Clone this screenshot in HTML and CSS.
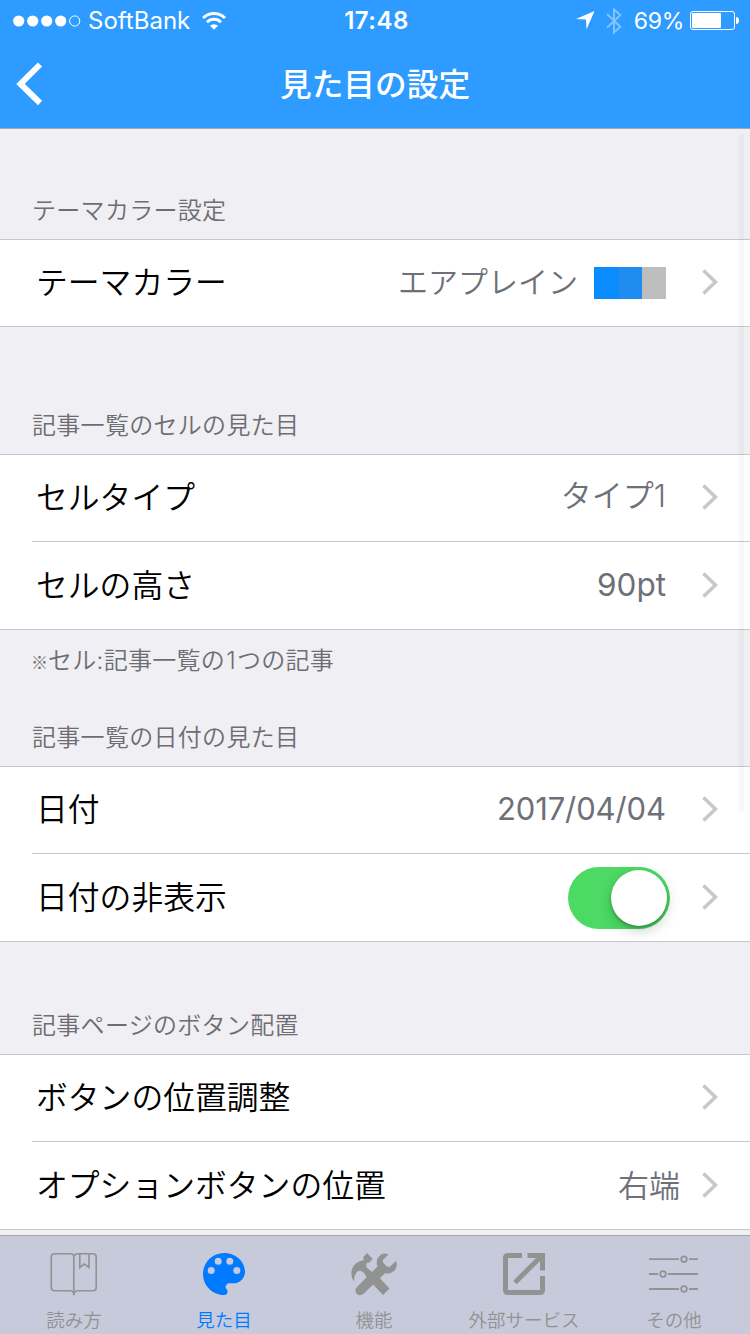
FILE: index.html
```html
<!DOCTYPE html>
<html lang="ja">
<head>
  <meta charset="UTF-8">
  <title>見た目の設定</title>
  <link rel="stylesheet" href="styles.css">
</head>
<body>
  <!-- 共通アイコン -->
  <svg class="defs" width="0" height="0">
    <symbol id="chevron" viewBox="0 0 16 26">
      <path d="M1.5 1.5 L13.5 13 L1.5 24.5" fill="none" stroke="#c7c7cc" stroke-width="3.6"/>
    </symbol>
  </svg>

  <header class="header">
    <div class="status">
      <div class="status-left">
        <svg width="68" height="12" viewBox="0 0 68 12" fill="#fff">
          <circle cx="5.7" cy="6" r="5.6"/>
          <circle cx="19.7" cy="6" r="5.6"/>
          <circle cx="33.7" cy="6" r="5.6"/>
          <circle cx="47.7" cy="6" r="5.6"/>
          <circle cx="61.7" cy="6" r="5.1" fill="none" stroke="#fff"/>
        </svg>
        <span class="carrier">SoftBank</span>
        <svg width="24" height="18" viewBox="0 0 24 18" fill="none" stroke="#fff" stroke-width="3">
          <path d="M1 6 A15.6 15.6 0 0 1 23 6"/>
          <path d="M5 10.3 A9.8 9.8 0 0 1 19 10.3"/>
          <path d="M12 17.8 L8 13.8 A5.8 5.8 0 0 1 16 13.8 Z" fill="#fff" stroke="none"/>
        </svg>
      </div>
      <div class="clock">17:48</div>
      <div class="status-right">
        <svg width="19" height="19" viewBox="0 0 19 19"><path d="M18.5 0 L10.5 18.5 L10 8.5 L0 8 Z" fill="#fff"/></svg>
        <svg class="bluetooth" width="16" height="28" viewBox="0 0 16 28" fill="none" stroke="#80c4ff" stroke-width="2">
          <path d="M1 7 L14.3 19.7 L8 25.5 V2.5 L14.3 8 L1 20.7"/>
        </svg>
        <span class="percent">69%</span>
        <svg width="50" height="20" viewBox="0 0 50 20">
          <rect x=".5" y=".5" width="44" height="18" rx="2.5" fill="none" stroke="#fff"/>
          <rect x="2" y="2" width="29" height="15" rx="1" fill="#fff"/>
          <path d="M46 6 Q49 6 49 9.5 Q49 13 46 13 Z" fill="#fff"/>
        </svg>
      </div>
    </div>
    <nav class="navbar">
      <svg class="back" width="28" height="44" viewBox="0 0 28 44"><path d="M24 2.5 L4.5 22 L24 41" fill="none" stroke="#fff" stroke-width="6"/></svg>
      <h1>見た目の設定</h1>
    </nav>
  </header>

  <main class="settings">
    <h2 class="first">テーマカラー設定</h2>
    <ul class="list">
      <li class="row">
        <span class="label">テーマカラー</span>
        <span class="value theme">エアプレイン</span>
        <span class="swatch"><i class="main"></i><i class="sub"></i><i class="gray"></i></span>
        <svg class="chevron"><use href="#chevron"/></svg>
      </li>
    </ul>

    <h2>記事一覧のセルの見た目</h2>
    <ul class="list">
      <li class="row">
        <span class="label">セルタイプ</span>
        <span class="value type">タイプ1</span>
        <svg class="chevron"><use href="#chevron"/></svg>
      </li>
      <li class="row">
        <span class="label">セルの高さ</span>
        <span class="value latin">90pt</span>
        <svg class="chevron"><use href="#chevron"/></svg>
      </li>
    </ul>
    <p class="note"><span class="mark">※</span>セル:記事一覧の<span class="one">1</span>つの記事</p>

    <h2 class="after-note">記事一覧の日付の見た目</h2>
    <ul class="list">
      <li class="row">
        <span class="label">日付</span>
        <span class="value latin date">2017/04/04</span>
        <svg class="chevron"><use href="#chevron"/></svg>
      </li>
      <li class="row">
        <span class="label">日付の非表示</span>
        <span class="toggle"><i class="knob"></i></span>
        <svg class="chevron"><use href="#chevron"/></svg>
      </li>
    </ul>

    <h2 class="buttons">記事ページのボタン配置</h2>
    <ul class="list">
      <li class="row">
        <span class="label">ボタンの位置調整</span>
        <svg class="chevron"><use href="#chevron"/></svg>
      </li>
      <li class="row">
        <span class="label">オプションボタンの位置</span>
        <span class="value edge">右端</span>
        <svg class="chevron"><use href="#chevron"/></svg>
      </li>
    </ul>
  </main>
  <div class="scrollbar"></div>

  <footer class="tabbar">
    <a class="tab">
      <svg width="50" height="44" viewBox="0 0 50 44" fill="none" stroke="#929292" stroke-width="1.6">
        <path d="M25 40.5 Q24 37.7 21 37.7 H5.5 Q2.3 37.7 2.3 34.5 V4 Q2.3 .8 5.5 .8 H21 Q24 .8 25 2.8 Q26 .8 29 .8 H44 Q47.2 .8 47.2 4 V34.5 Q47.2 37.7 44 37.7 H29 Q26 37.7 25 40.5 Z"/>
        <path d="M24.8 2 V42"/>
        <path d="M30.8 1 V14.5 L35.3 11 L40 14.5 V1"/>
      </svg>
      <span>読み方</span>
    </a>
    <a class="tab active">
      <svg width="42" height="44" viewBox="0 0 42 44">
        <path fill="#007aff" fill-rule="evenodd" d="M21 0 C9.4 0 0 9.4 0 21 S9.4 42 21 42 A3.5 3.5 0 0 0 24.5 38.5 C24.5 37.6 24.1 36.8 23.6 36.2 A3.5 3.5 0 0 1 26.2 30.3 H30.3 A11.7 11.7 0 0 0 42 18.7 C42 8.4 32.6 0 21 0 Z M8.2 21 A3.5 3.5 0 1 1 8.2 14 A3.5 3.5 0 0 1 8.2 21 Z M15.2 11.7 A3.5 3.5 0 1 1 15.2 4.7 A3.5 3.5 0 0 1 15.2 11.7 Z M26.8 11.7 A3.5 3.5 0 1 1 26.8 4.7 A3.5 3.5 0 0 1 26.8 11.7 Z M33.8 21 A3.5 3.5 0 1 1 33.8 14 A3.5 3.5 0 0 1 33.8 21 Z"/>
      </svg>
      <span>見た目</span>
    </a>
    <a class="tab">
      <svg width="46" height="44" viewBox="0 0 46 44" fill="#929292">
        <!-- スパナ -->
        <path d="M37.5 1.2 L32 7 V9.5 L36 13.8 H38.8 L45 8 Q47 13 43.5 17.5 Q39.5 21.5 34 20.3 L12.5 40.8 Q8.5 43.5 5.6 40.8 Q3 37.5 6 34 L26.5 13.5 Q24.5 8 27.5 4 Q31.5 -1 37.5 1.2 Z"/>
        <!-- ハンマー -->
        <path d="M12.3 4 L16 0 L21.8 6 L18 9.7 H16.2 Q14.2 12.5 16.2 15 L20.5 18.5 L24.5 20.5 L38.5 35.5 L32 42 L15.5 24.5 L13.5 20.5 Q9.5 16 6 19 Q3 22 3 28.5 Q-1 23 1 16 Q4 8.5 12.8 7 Z"/>
      </svg>
      <span>機能</span>
    </a>
    <a class="tab">
      <svg width="42" height="44" viewBox="0 0 42 44" fill="none" stroke="#929292" stroke-width="5">
        <path d="M19 2.5 H5 Q2.5 2.5 2.5 5 V37 Q2.5 39.5 5 39.5 H37 Q39.5 39.5 39.5 37 V23"/>
        <path d="M24.5 2.5 H39.5 V17.5"/>
        <path d="M12 29.5 L38 3.5"/>
      </svg>
      <span>外部サービス</span>
    </a>
    <a class="tab">
      <svg width="50" height="44" viewBox="0 0 50 44" fill="none" stroke="#929292" stroke-width="1.8">
        <path d="M0 6.2 H30 M40 6.2 H49 M0 21 H9 M19 21 H49 M0 36 H30 M40 36 H49"/>
        <circle cx="35" cy="6.2" r="2.8"/>
        <circle cx="14" cy="21" r="2.8"/>
        <circle cx="35" cy="36" r="2.8"/>
      </svg>
      <span>その他</span>
    </a>
  </footer>
</body>
</html>
```
FILE: styles.css
```css
* {
  box-sizing: border-box;
}
body {
  margin: 0;
  height: 1334px;
  overflow: hidden;
  display: flex;
  flex-direction: column;
  background-color: #efeff4;
  font-family: Inter, "Noto Sans CJK JP", sans-serif;
}
svg {
  display: block;
  flex: none;
}
.defs {
  position: absolute;
}

/* ヘッダー */
.header {
  height: 129px;
  background-color: #2d9bff;
  border-bottom: 1px solid #a7a7aa;
  color: white;
}
.status {
  display: grid;
  grid-template-columns: 1fr auto 1fr;
  align-items: center;
  height: 41px;
  padding: 0 10px 0 13px;
  font-size: 24px;
}
.status-left, .status-right {
  display: flex;
  align-items: center;
}
.status-right {
  justify-content: flex-end;
}
.carrier {
  margin: 0 12px 0 7px;
}
.clock {
  font-weight: 600;
  letter-spacing: 0.5px;
}
.bluetooth {
  margin: 0 12px 0 11px;
}
.percent {
  margin-right: 6px;
  font-size: 23px;
  letter-spacing: -0.3px;
}
.navbar {
  display: grid;
  grid-template-columns: 60px 1fr 60px;
  align-items: center;
  height: 86px;
}
.back {
  margin-left: 16px;
}
h1 {
  margin: 0;
  padding-bottom: 4px;
  font-size: 31.7px;
  font-weight: 500;
  text-align: center;
}

/* 設定リスト */
.settings {
  flex: none;
}
h2 {
  display: flex;
  align-items: flex-end;
  height: 127px;
  margin: 0;
  padding: 0 32px 12px;
  font-size: 24px;
  line-height: 32px;
  font-weight: 350;
  letter-spacing: 0.3px;
  color: #6d6d72;
}
h2.first {
  height: 110px;
}
h2.after-note {
  height: 74px;
}
h2.buttons {
  height: 112px;
}
.note {
  height: 62px;
  margin: 0;
  padding: 15px 31px;
  font-size: 24px;
  line-height: 32px;
  font-weight: 350;
  letter-spacing: 0.3px;
  color: #6d6d72;
}
.mark {
  display: inline-block;
  width: 17px;
  font-family: "Noto Sans CJK JP", sans-serif;
  font-size: 17px;
  line-height: 24px;
  letter-spacing: 0;
}
.one {
  margin: 0 1px;
}
.list {
  margin: 0;
  padding: 0;
  list-style: none;
  background-color: white;
  border-top: 1px solid #c8c7cc;
  border-bottom: 1px solid #c8c7cc;
}
.row {
  display: flex;
  align-items: center;
  height: 86px;
  margin-left: 32px;
  padding: 0 32px 2px 4px;
  font-size: 31.8px;
  font-weight: 350;
}
.row + .row {
  height: 88px;
  padding-bottom: 1px;
  border-top: 1px solid #c8c7cc;
}
.label {
  flex: 1;
  padding-bottom: 4px;
  color: black;
}
.value {
  margin-right: 36px;
  padding-bottom: 4px;
  font-size: 30px;
  color: #6d7078;
}
.value.theme {
  margin-right: 16px;
}
.value.type {
  padding-bottom: 8px;
  font-size: 31px;
}
.value.latin {
  padding-bottom: 1px;
  font-size: 31.5px;
  font-weight: 400;
}
.value.date {
  font-size: 31px;
  letter-spacing: -0.1px;
}
.value.edge {
  margin-right: 22px;
  font-size: 31px;
}
.chevron {
  width: 16px;
  height: 26px;
}
.swatch {
  display: flex;
  margin-right: 36px;
  padding-top: 2px;
}
.swatch i {
  width: 24px;
  height: 32px;
}
.main {
  background-color: #0a8cff;
}
.sub {
  background-color: #1e8cf0;
}
.gray {
  background-color: #bebebe;
}
.toggle {
  display: flex;
  justify-content: flex-end;
  width: 102px;
  height: 62px;
  margin: 1px 32px 0 0;
  padding: 3px;
  border-radius: 31px;
  background-color: #4cd964;
}
.knob {
  width: 56px;
  height: 56px;
  border-radius: 50%;
  background-color: white;
  box-shadow: 0 5px 14px rgba(0, 0, 0, 0.18), 0 2px 3px rgba(0, 0, 0, 0.25);
}
.scrollbar {
  position: absolute;
  top: 134px;
  left: 739px;
  width: 5px;
  height: 678px;
  border-radius: 3px;
  background-color: rgba(0, 0, 0, 0.03);
}

/* タブバー */
.tabbar {
  display: grid;
  grid-template-columns: repeat(5, 150px);
  flex: none;
  height: 99px;
  margin-top: 5px;
  border-top: 1px solid #a7a7aa;
  background-color: #c7cadb;
}
.tab {
  display: flex;
  flex-direction: column;
  align-items: center;
  padding: 17px 2px 0 0;
  font-size: 18.5px;
  line-height: 24px;
  font-weight: 350;
  color: #929292;
}
.tab span {
  margin-top: 11px;
}
.tab.active {
  color: #007aff;
}
```
